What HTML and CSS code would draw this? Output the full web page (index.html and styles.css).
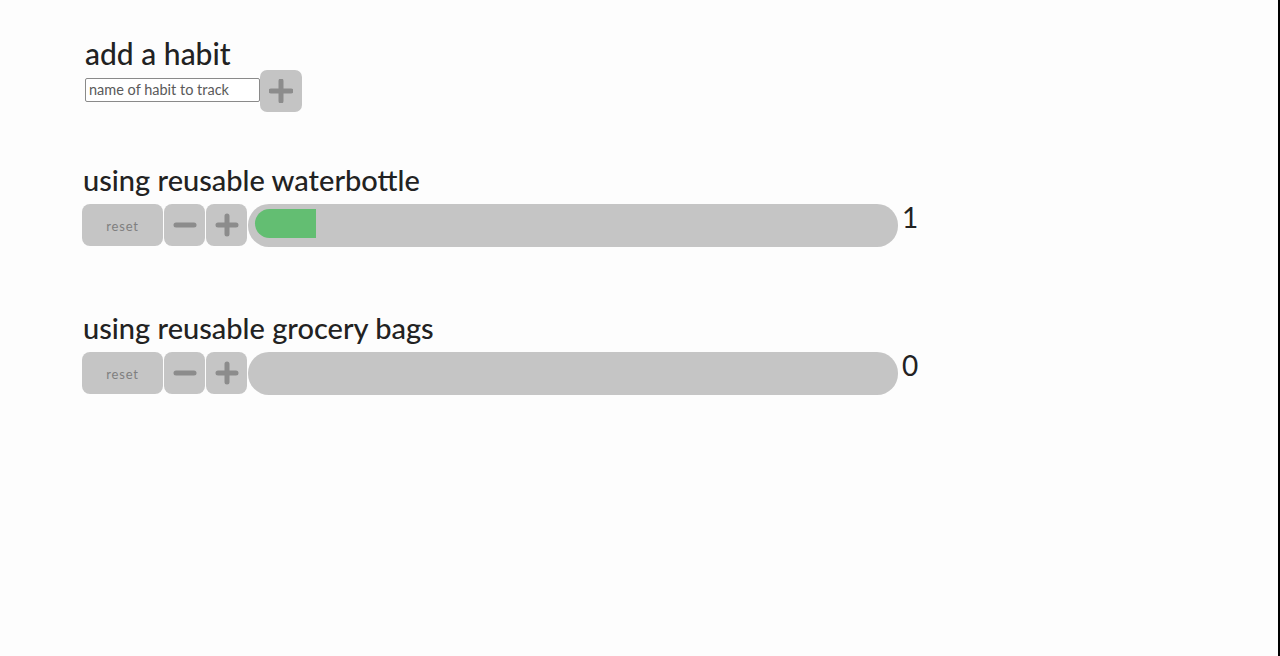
FILE: index.html
```html
<!DOCTYPE html>
<html>
<head>
<meta charset="utf-8">
<link rel="stylesheet" href="styles.css">
</head>
<body>
<div class="page">
  <section class="add">
    <h1 class="add-title">add a habit</h1>
    <div class="add-row">
      <input class="add-input" type="text" placeholder="name of habit to track">
      <button class="add-btn" aria-label="add">
        <svg width="24" height="24" viewBox="0 0 24 24"><path d="M12 2v20M2 12h20" stroke="#8c8c8c" stroke-width="5" stroke-linecap="round"/></svg>
      </button>
    </div>
  </section>

  <section class="habit">
    <h2 class="habit-title">using reusable waterbottle</h2>
    <div class="controls">
      <button class="btn reset">reset</button>
      <button class="btn icon" aria-label="decrease">
        <svg width="24" height="24" viewBox="0 0 24 24"><path d="M3 12h18" stroke="#8c8c8c" stroke-width="5" stroke-linecap="round"/></svg>
      </button>
      <button class="btn icon" aria-label="increase">
        <svg width="24" height="24" viewBox="0 0 24 24"><path d="M12 3v18M3 12h18" stroke="#8c8c8c" stroke-width="5" stroke-linecap="round"/></svg>
      </button>
      <div class="bar"><div class="fill" style="width:61px"></div></div>
      <span class="count">1</span>
    </div>
  </section>

  <section class="habit">
    <h2 class="habit-title">using reusable grocery bags</h2>
    <div class="controls">
      <button class="btn reset">reset</button>
      <button class="btn icon" aria-label="decrease">
        <svg width="24" height="24" viewBox="0 0 24 24"><path d="M3 12h18" stroke="#8c8c8c" stroke-width="5" stroke-linecap="round"/></svg>
      </button>
      <button class="btn icon" aria-label="increase">
        <svg width="24" height="24" viewBox="0 0 24 24"><path d="M12 3v18M3 12h18" stroke="#8c8c8c" stroke-width="5" stroke-linecap="round"/></svg>
      </button>
      <div class="bar"></div>
      <span class="count">0</span>
    </div>
  </section>
</div>
</body>
</html>
```

FILE: styles.css
```css
html, body {
  margin: 0;
  padding: 0;
}
body {
  background: #fdfdfd;
  font-family: "Lato", "Liberation Sans", sans-serif;
  color: #222;
}
.page {
  box-sizing: border-box;
  min-height: 100vh;
  border-right: 2px solid #000;
  padding: 37px 0 0 82px;
}
.add {
  padding-left: 3px;
}
.add-title {
  margin: 0;
  font-size: 30px;
  font-weight: 500;
  line-height: 32px;
}
.add-row {
  display: flex;
  align-items: center;
  margin-top: 1px;
}
.add-input {
  box-sizing: border-box;
  width: 175px;
  height: 24px;
  margin-bottom: 3px;
  border: 1px solid #8a8a8a;
  border-radius: 2px;
  background: #fff;
  padding: 0 3px;
  font-family: "Lato", "Liberation Sans", sans-serif;
  font-size: 14.5px;
  color: #333;
  outline: none;
}
.add-input::placeholder {
  color: #5a5a5a;
}
.add-btn {
  box-sizing: border-box;
  width: 42px;
  height: 42px;
  border: none;
  border-radius: 7px;
  background: #c4c4c4;
  padding: 0;
  display: flex;
  align-items: center;
  justify-content: center;
}
.habit {
  margin-top: 52px;
}
.habit + .habit {
  margin-top: 65px;
}
.habit-title {
  margin: 0 0 8px 1px;
  font-size: 29px;
  font-weight: 500;
  line-height: 32px;
}
.controls {
  display: flex;
  align-items: flex-start;
}
.btn {
  box-sizing: border-box;
  height: 42px;
  border: none;
  border-radius: 8px;
  background: #c5c5c5;
  padding: 0;
  display: flex;
  align-items: center;
  justify-content: center;
  margin-right: 1px;
}
.reset {
  width: 81px;
  font-family: "Lato", "Liberation Sans", sans-serif;
  font-size: 13px;
  color: #7f7f7f;
  padding-top: 2px;
  letter-spacing: 0.8px;
}
.icon {
  width: 41px;
}
.bar {
  box-sizing: border-box;
  width: 650px;
  height: 43px;
  border-radius: 21px;
  background: #c5c5c5;
  padding: 5px 7px 8px;
  display: flex;
}
.fill {
  height: 29px;
  background: #63be72;
  border-radius: 15px 0 0 15px;
}
.count {
  margin-left: 4px;
  margin-top: -3px;
  font-size: 28px;
  line-height: 32px;
  color: #222;
}
```
